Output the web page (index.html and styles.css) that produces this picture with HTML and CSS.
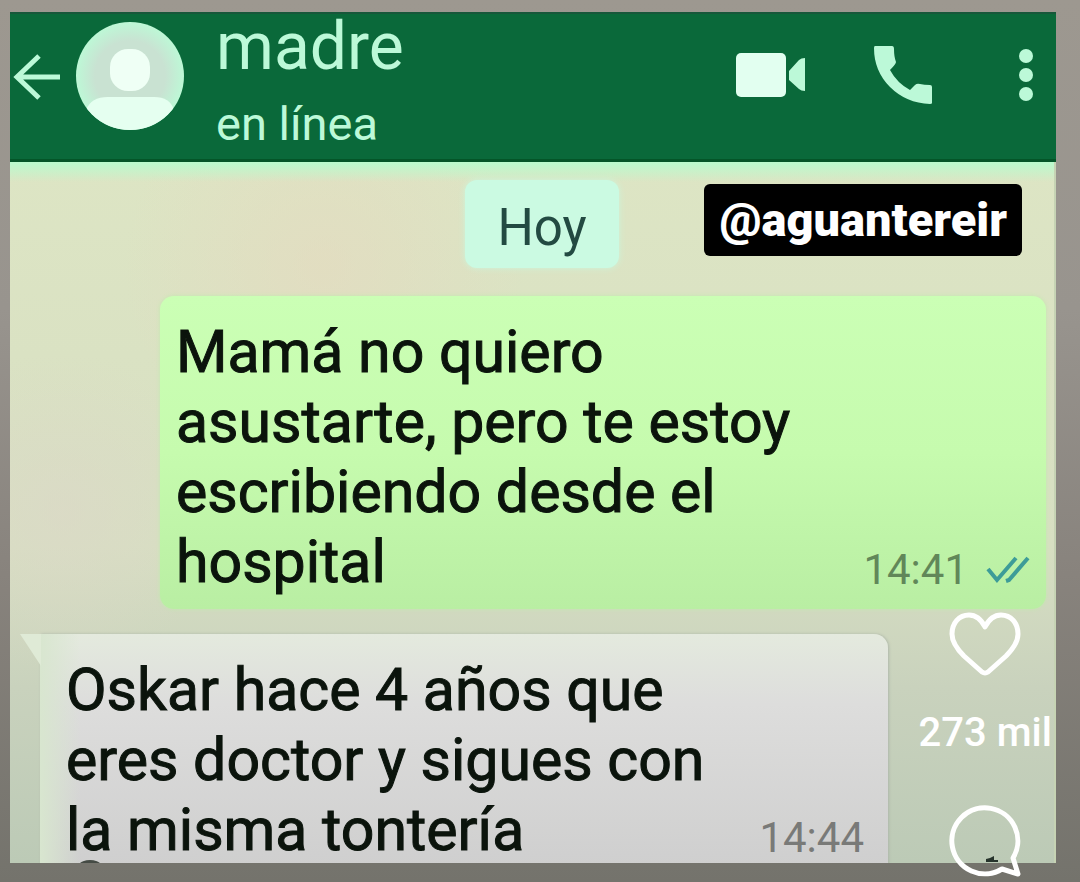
FILE: index.html
```html
<!DOCTYPE html>
<html lang="es">
  <head>
    <meta charset="UTF-8" />
    <meta name="viewport" content="width=device-width, initial-scale=1.0" />
    <title>madre</title>
    <link rel="stylesheet" href="styles.css">
  </head>
  <body>
    <main class="phone">
      <header class="topbar">
        <button class="icon-btn" aria-label="Volver">
          <svg width="48" height="48" viewBox="0 0 48 48" fill="none" stroke="currentColor" stroke-width="5">
            <path d="M48 24H4M27 3L5 24l22 21" />
          </svg>
        </button>
        <svg class="avatar" viewBox="0 0 108 108">
          <defs>
            <clipPath id="round"><circle cx="54" cy="54" r="54" /></clipPath>
            <radialGradient id="face">
              <stop offset="0.65" stop-color="#c9e2d2" />
              <stop offset="1" stop-color="#bdf8d6" />
            </radialGradient>
          </defs>
          <g clip-path="url(#round)">
            <rect width="108" height="108" fill="url(#face)" />
            <rect x="34" y="27" width="40" height="42" rx="18" fill="#effff5" />
            <path d="M10 108V88q5-13 22-13h46q16 0 20 13v20z" fill="#e5fff0" />
          </g>
        </svg>
        <div class="contact">
          <h1 class="name">madre</h1>
          <p class="status">en línea</p>
        </div>
        <div class="actions">
          <button class="icon-btn" aria-label="Videollamada">
            <svg width="70" height="44" viewBox="0 0 70 44" fill="currentColor">
              <rect width="50" height="44" rx="5" fill="#e2fff0" />
              <path d="M53 18L63 7q2-2 6-2v33q-4 0-6-2L53 27z" />
            </svg>
          </button>
          <button class="icon-btn" aria-label="Llamar">
            <svg width="58" height="58" viewBox="0 0 58 58" fill="currentColor">
              <path d="M1 0h17q2 0 2 3 0 8 2 13 0 2-6 8 7 13 20 20l5-5q2-2 5-1 4 1 10 1 2 0 2 2v16q0 1-2 1Q32 57 16 41 0 25 0 2q0-2 1-2z" />
            </svg>
          </button>
          <button class="icon-btn menu" aria-label="Más opciones">
            <svg width="16" height="54" viewBox="0 0 16 54" fill="currentColor">
              <circle cx="8" cy="8" r="7" />
              <circle cx="8" cy="27" r="7" />
              <circle cx="8" cy="46" r="7" />
            </svg>
          </button>
        </div>
      </header>

      <section class="chat">
        <div class="day">Hoy</div>
        <article class="bubble sent">
          <p class="text">Mamá no quiero asustarte, pero te estoy escribiendo desde el hospital</p>
          <div class="meta">
            <time>14:41</time>
            <svg width="44" height="30" viewBox="0 0 44 30" fill="none" stroke="#3d9c98" stroke-width="4">
              <path d="M2 14l9 11L30 3M20 26l3-1L42 3" />
            </svg>
          </div>
        </article>
        <article class="bubble received">
          <p class="text">Oskar hace 4 años que eres doctor y sigues con la misma tontería</p>
          <div class="meta"><time>14:44</time></div>
        </article>
        <div class="cut-emoji"></div>
      </section>
    </main>

    <div class="watermark">@aguantereir</div>

    <aside class="reactions">
      <button class="reaction" aria-label="Me gusta">
        <svg width="72" height="64" viewBox="0 0 72 64" fill="none" stroke="currentColor" stroke-width="5" stroke-linejoin="round">
          <path d="M36 15C32 7 27 3 20 3 10 3 3 11 3 22c0 9 6 16 12 22l18 16q3 2 6 0l18-16c6-6 12-13 12-22C69 11 62 3 52 3 45 3 40 7 36 15z" />
        </svg>
      </button>
      <span class="count">273 mil</span>
      <button class="reaction" aria-label="Comentar">
        <svg width="72" height="72" viewBox="0 0 72 72" fill="none" stroke="currentColor" stroke-width="5" stroke-linejoin="round">
          <path d="M37 57v-3l4-1 4-2v4h4v2z" fill="#26332b" stroke="none" />
          <path d="M64 53A33 33 0 1 0 53 64l16 5z" />
        </svg>
      </button>
    </aside>
  </body>
</html>
```
FILE: styles.css
```css
* {
  box-sizing: border-box;
}

body {
  margin: 0;
  height: 100vh;
  padding: 12px 24px 19px 10px;
  position: relative;
  overflow: hidden;
  background: linear-gradient(#9d9890, #98948e 35%, #88837d 65%, #74736c);
  font-family: Roboto, "Liberation Sans", sans-serif;
}

h1,
p {
  margin: 0;
  font-weight: 400;
}

button {
  padding: 0;
  border: none;
  background: none;
  color: inherit;
  cursor: pointer;
}

svg {
  display: block;
}

.phone {
  height: 100%;
  display: flex;
  flex-direction: column;
}

/* Barra superior */
.topbar {
  display: flex;
  align-items: flex-start;
  height: 150px;
  flex-shrink: 0;
  padding: 0 22px 0 2px;
  background: #0a693a;
  border-top: 2px solid #17573a;
  border-bottom: 3px solid #045528;
  color: #bcf9d8;
}

.topbar > .icon-btn {
  margin-top: 39px;
}

.avatar {
  width: 108px;
  height: 108px;
  margin: 8px 0 0 16px;
}

.contact {
  margin-left: 32px;
}

.name {
  font-size: 66px;
  line-height: 66px;
}

.status {
  font-size: 47px;
  line-height: 64px;
  margin-top: 12px;
}

.actions {
  display: flex;
  align-items: center;
  gap: 68px;
  margin-top: 32px;
  margin-left: auto;
}

.menu {
  margin-left: 18px;
}

/* Conversación */
.chat {
  flex: 1;
  min-height: 0;
  position: relative;
  display: flex;
  flex-direction: column;
  padding: 18px 8px 0 10px;
  overflow: hidden;
  background:
    linear-gradient(#b9fbcd, rgba(185, 251, 205, 0) 20px),
    radial-gradient(circle at 30% 15%, rgba(232, 215, 190, 0.5), transparent 200px),
    radial-gradient(circle at 5% 50%, rgba(220, 215, 200, 0.6), transparent 160px),
    linear-gradient(#dde5c4, #d7dfc2 55%, #c9d2bd 75%, #bccab6);
  border-right: 2px solid #c6d3b4;
}

.day {
  align-self: center;
  padding: 16px 32px 8px;
  border-radius: 12px;
  background: #cbfae2;
  box-shadow: 0 0 6px #cbf6dc;
  color: #234a42;
  font-size: 51px;
  line-height: 64px;
  margin-left: 18px;
}

.bubble {
  display: flex;
  align-items: flex-end;
  justify-content: space-between;
  flex-shrink: 0;
  padding: 21px 16px 12px;
  border-radius: 14px;
}

.text {
  max-width: 660px;
  font-size: 59px;
  line-height: 70px;
  color: #0b140c;
  -webkit-text-stroke: 1px #0b140c;
}

.meta {
  display: flex;
  align-items: center;
  gap: 18px;
  font-size: 42px;
  line-height: 54px;
}

.sent {
  margin: 28px 0 0 140px;
  background: linear-gradient(#cbffb5, #c6fbae 50%, #b9eea3);
  box-shadow: 0 0 4px #c3e9ae;
}

.sent .meta {
  color: #618759;
}

.received {
  position: relative;
  margin: 25px 158px 0 20px;
  padding: 21px 24px 12px 26px;
  background: linear-gradient(90deg, #d8e6cf, rgba(216, 230, 207, 0) 40px), linear-gradient(#e4eade, #dddddc 70px, #cecece);
  box-shadow: 1px 0 3px #aeb7aa;
  border-top-left-radius: 0;
}

/* Pico del globo recibido */
.received::before {
  content: "";
  position: absolute;
  top: 0;
  left: -20px;
  width: 21px;
  height: 32px;
  background: #dfead6;
  clip-path: polygon(0 0, 100% 0, 100% 100%);
}

.received .meta {
  color: #797a78;
}

/* Emoji cortado por el borde inferior */
.cut-emoji {
  position: absolute;
  left: 62px;
  bottom: -33px;
  width: 36px;
  height: 36px;
  border-radius: 50%;
  background: #454b45;
}

/* Capas superpuestas */
.watermark {
  position: absolute;
  top: 184px;
  right: 58px;
  padding: 6px 15px;
  border-radius: 6px;
  background: #000;
  color: #fff;
  font-size: 47px;
  font-weight: 900;
  line-height: 60px;
}

.reactions {
  position: absolute;
  top: 612px;
  right: 28px;
  display: flex;
  flex-direction: column;
  align-items: center;
  color: #fff;
}

.count {
  margin: 33px 0 48px;
  font-size: 40px;
  font-weight: 500;
  line-height: 48px;
}
```
